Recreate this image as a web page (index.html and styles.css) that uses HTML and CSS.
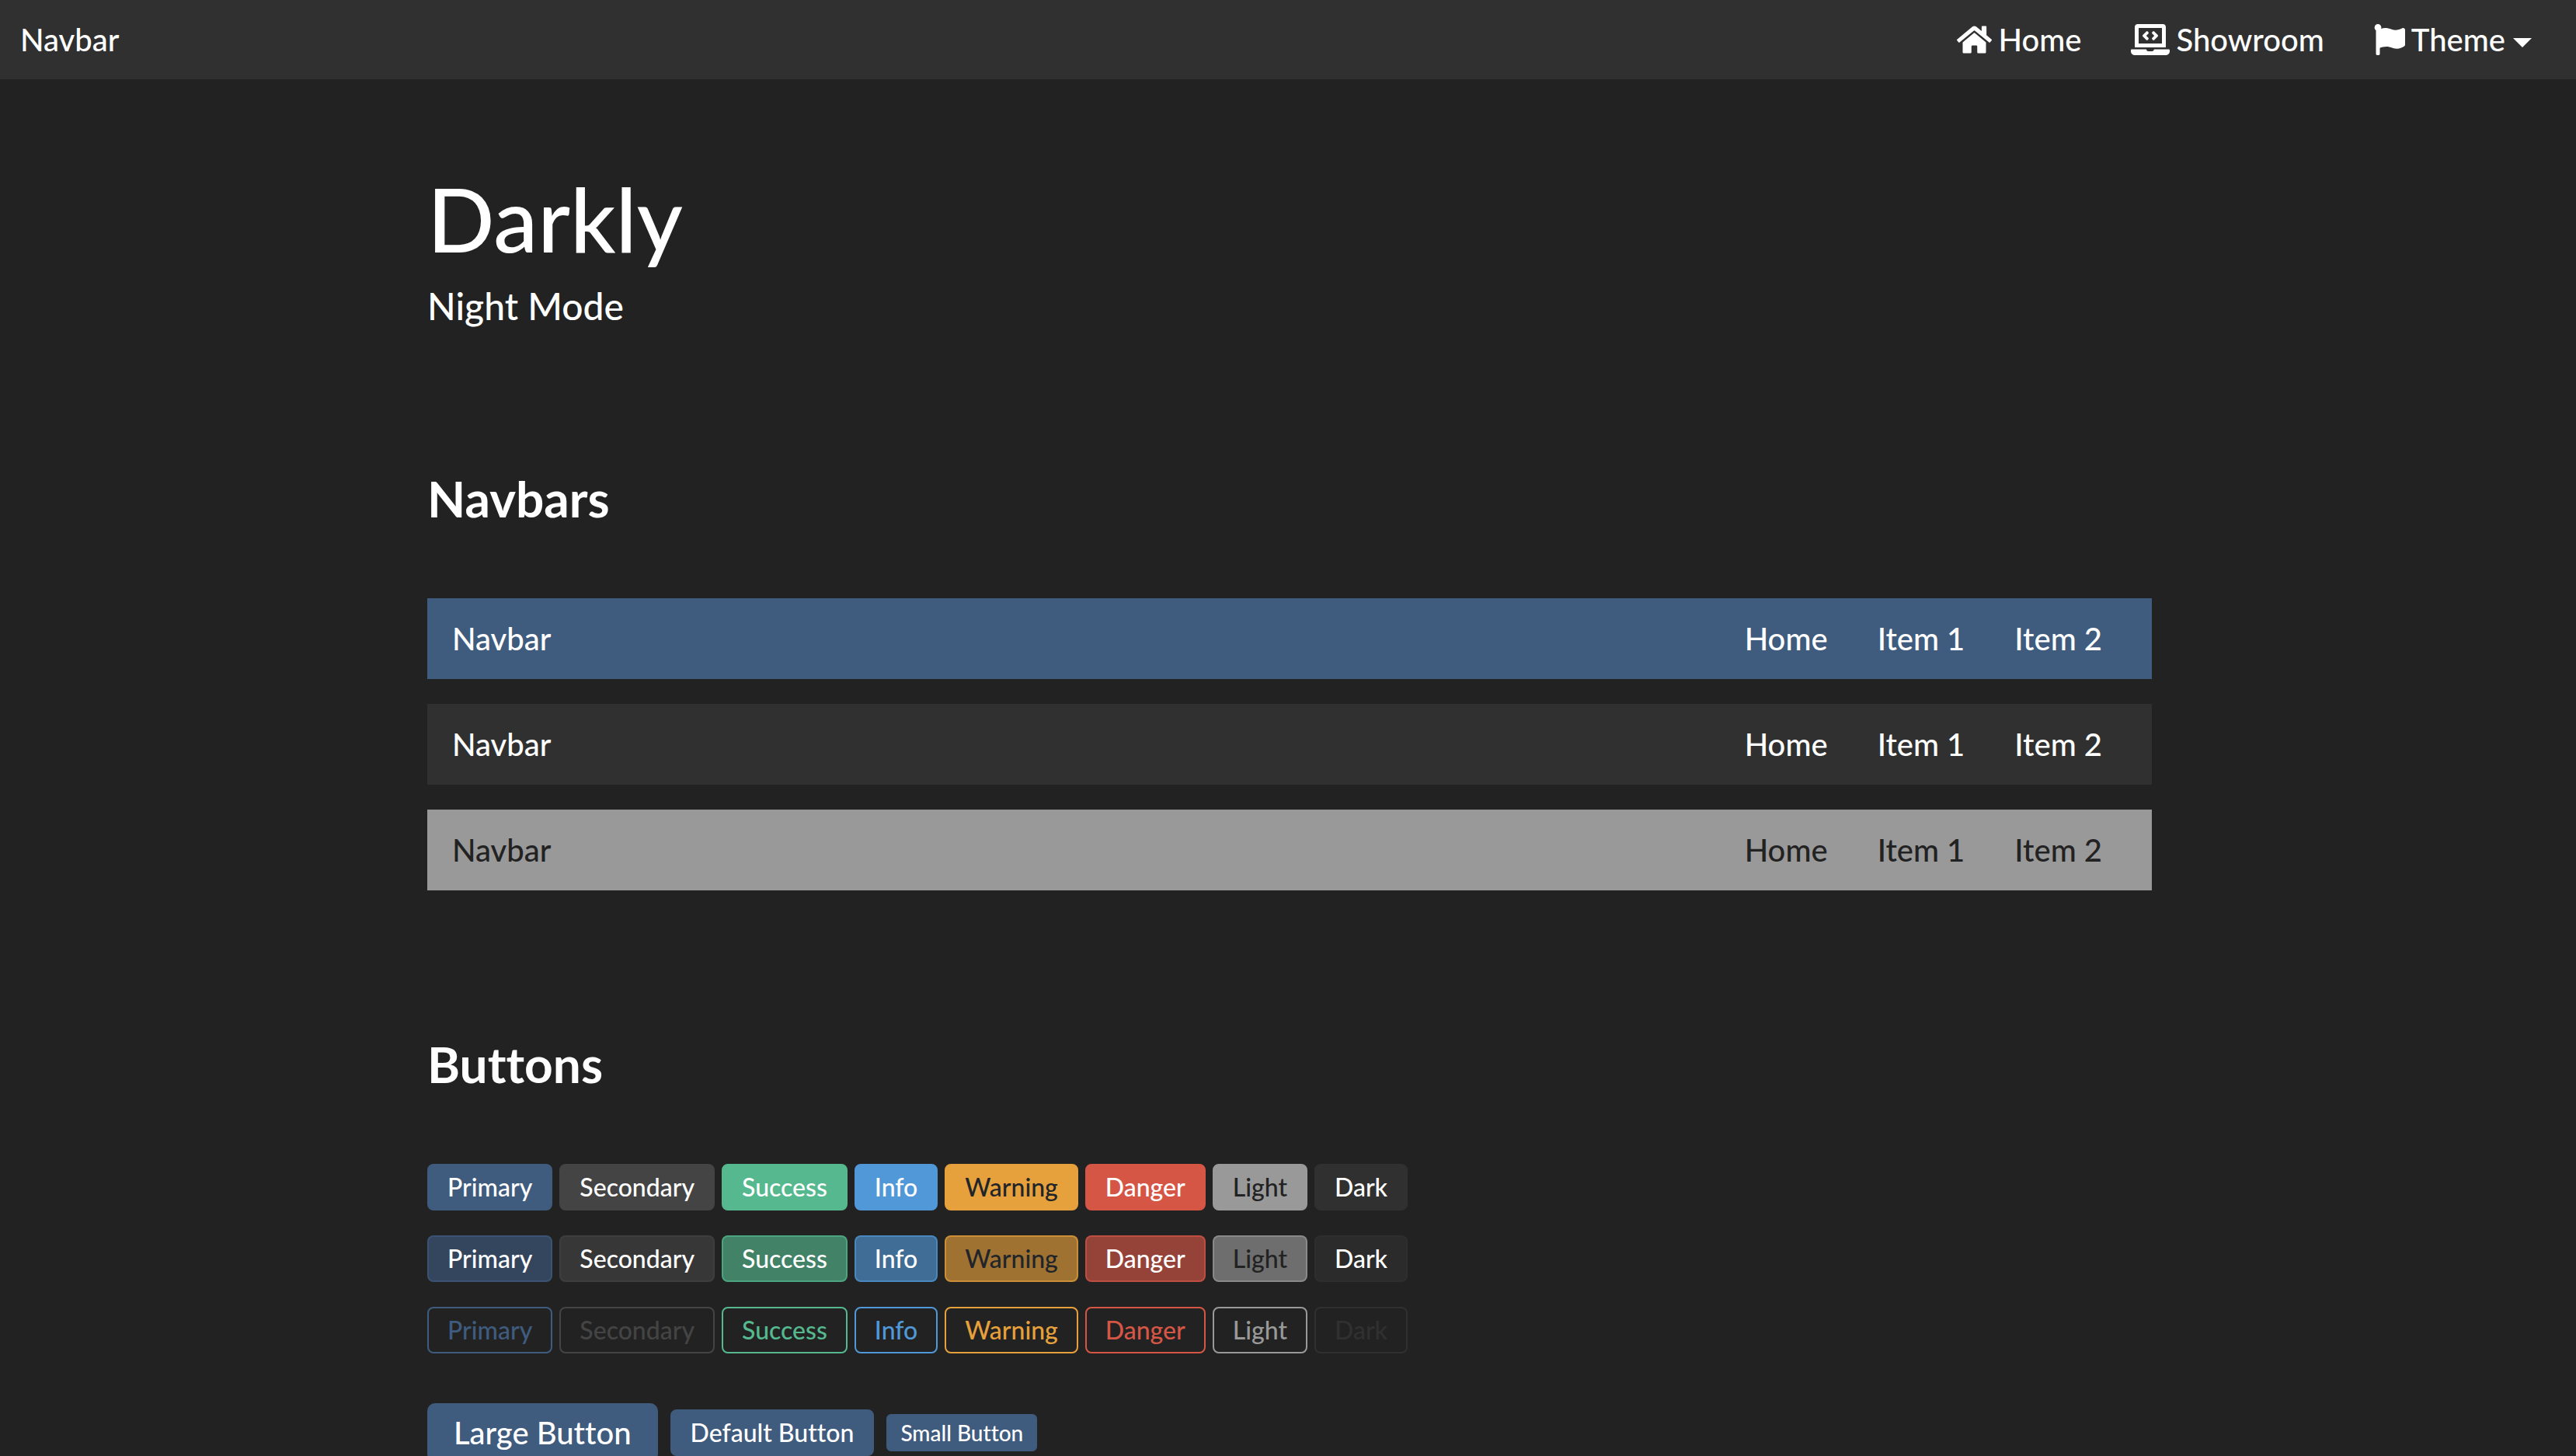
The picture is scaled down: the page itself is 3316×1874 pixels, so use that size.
FILE: index.html
```
<!DOCTYPE html>
<html lang="en">
<head>
<meta charset="utf-8">
<title>Darkly</title>
<meta name="viewport" content="width=device-width, initial-scale=1">
<link rel="stylesheet" href="styles.css">
</head>
<body>
<header class="topbar">
  <a class="brand" href="#">Navbar</a>
  <nav class="links" aria-label="Main">
    <a class="link" href="#"><svg class="icon" viewBox="0 0 576 512" width="45" height="40" aria-hidden="true"><path d="M280.37 148.26L96 300.11V464a16 16 0 0 0 16 16l112.06-.29a16 16 0 0 0 15.92-16V368a16 16 0 0 1 16-16h64a16 16 0 0 1 16 16v95.64a16 16 0 0 0 16 16.05L464 480a16 16 0 0 0 16-16V300L295.67 148.26a12.19 12.19 0 0 0-15.3 0zM571.6 251.47L488 182.56V44.05a12 12 0 0 0-12-12h-56a12 12 0 0 0-12 12v72.61L318.47 43a48 48 0 0 0-61 0L4.34 251.47a12 12 0 0 0-1.6 16.9l25.5 31A12 12 0 0 0 45.15 301l235.22-193.74a12.19 12.19 0 0 1 15.3 0L530.9 301a12 12 0 0 0 16.9-1.6l25.5-31a12 12 0 0 0-1.7-16.93z"/></svg>Home</a>
    <a class="link" href="#"><svg class="icon" viewBox="0 0 640 512" width="50" height="40" aria-hidden="true"><path d="M255.03 261.65c6.25 6.25 16.38 6.25 22.63 0l11.31-11.31c6.25-6.25 6.25-16.38 0-22.63L253.25 192l35.71-35.72c6.25-6.25 6.25-16.38 0-22.63l-11.31-11.31c-6.25-6.25-16.38-6.25-22.63 0l-58.34 58.34c-6.25 6.25-6.25 16.38 0 22.63l58.35 58.34zm96.01-11.3l11.31 11.31c6.25 6.25 16.38 6.25 22.63 0l58.34-58.34c6.25-6.25 6.25-16.38 0-22.63l-58.34-58.34c-6.25-6.25-16.38-6.25-22.63 0l-11.31 11.31c-6.25 6.25-6.25 16.38 0 22.63L386.75 192l-35.71 35.72c-6.25 6.25-6.25 16.38 0 22.63zM624 416H381.54c-.74 19.81-14.71 32-32.74 32H288c-18.69 0-33.02-17.47-32.77-32H16c-8.8 0-16 7.2-16 16v16c0 35.2 28.8 64 64 64h512c35.2 0 64-28.8 64-64v-16c0-8.8-7.2-16-16-16zM576 48c0-26.4-21.6-48-48-48H112C85.6 0 64 21.6 64 48v336h512V48zm-64 272H128V64h384v256z"/></svg>Showroom</a>
    <a class="link" href="#" aria-haspopup="true"><svg class="icon" viewBox="0 0 512 512" width="40" height="40" aria-hidden="true"><path d="M349.565 98.783C295.978 98.783 251.721 64 184.348 64c-24.955 0-47.309 4.384-68.045 12.013a55.947 55.947 0 0 0 3.586-23.562C118.117 24.015 94.806 1.206 66.338.048 34.345-1.254 8 24.296 8 56c0 19.026 9.497 35.825 24 45.945V488c0 13.255 10.745 24 24 24h16c13.255 0 24-10.745 24-24v-94.4c28.311-12.064 63.582-22.122 114.435-22.122 53.588 0 97.844 34.783 165.217 34.783 48.169 0 86.667-16.294 122.505-40.858C506.84 359.452 512 349.571 512 339.045v-243.1c0-23.393-24.269-38.87-45.485-29.016-34.338 15.948-76.454 31.854-116.95 31.854z"/></svg>Theme<span class="caret"></span></a>
  </nav>
</header>

<main class="container">
  <div class="hero">
    <h1 class="hero-title">Darkly</h1>
    <p class="hero-lead">Night Mode</p>
  </div>

  <section class="section">
    <h2 class="section-title">Navbars</h2>
    <div class="navbars">
      <div class="navbar primary">
        <a class="brand" href="#">Navbar</a>
        <nav class="links" aria-label="Primary"><a class="link" href="#">Home</a><a class="link" href="#">Item 1</a><a class="link" href="#">Item 2</a></nav>
      </div>
      <div class="navbar dark">
        <a class="brand" href="#">Navbar</a>
        <nav class="links" aria-label="Dark"><a class="link" href="#">Home</a><a class="link" href="#">Item 1</a><a class="link" href="#">Item 2</a></nav>
      </div>
      <div class="navbar light">
        <a class="brand" href="#">Navbar</a>
        <nav class="links" aria-label="Light"><a class="link" href="#">Home</a><a class="link" href="#">Item 1</a><a class="link" href="#">Item 2</a></nav>
      </div>
    </div>
  </section>

  <section class="section">
    <h2 class="section-title">Buttons</h2>
    <div class="button-rows">
      <div class="row">
        <button type="button" class="btn primary">Primary</button>
        <button type="button" class="btn secondary">Secondary</button>
        <button type="button" class="btn success">Success</button>
        <button type="button" class="btn info">Info</button>
        <button type="button" class="btn warning">Warning</button>
        <button type="button" class="btn danger">Danger</button>
        <button type="button" class="btn light">Light</button>
        <button type="button" class="btn dark">Dark</button>
      </div>
      <div class="row">
        <button type="button" class="btn muted primary">Primary</button>
        <button type="button" class="btn muted secondary">Secondary</button>
        <button type="button" class="btn muted success">Success</button>
        <button type="button" class="btn muted info">Info</button>
        <button type="button" class="btn muted warning">Warning</button>
        <button type="button" class="btn muted danger">Danger</button>
        <button type="button" class="btn muted light">Light</button>
        <button type="button" class="btn muted dark">Dark</button>
      </div>
      <div class="row">
        <button type="button" class="btn outline primary">Primary</button>
        <button type="button" class="btn outline secondary">Secondary</button>
        <button type="button" class="btn outline success">Success</button>
        <button type="button" class="btn outline info">Info</button>
        <button type="button" class="btn outline warning">Warning</button>
        <button type="button" class="btn outline danger">Danger</button>
        <button type="button" class="btn outline light">Light</button>
        <button type="button" class="btn outline dark">Dark</button>
      </div>
    </div>
    <div class="sizes">
      <button type="button" class="btn btn-lg primary">Large Button</button>
      <button type="button" class="btn primary">Default Button</button>
      <button type="button" class="btn btn-sm primary">Small Button</button>
    </div>
  </section>
</main>
</body>
</html>
```
FILE: styles.css
```
* {
  box-sizing: border-box;
}

body {
  margin: 0;
  background: #222;
  color: #fff;
  font-family: Lato, "Liberation Sans", sans-serif;
  font-size: 32px;
  font-weight: 500;
  font-variant-ligatures: none;
  line-height: 48px;
}

h1, h2, p {
  margin: 0;
}

/* Colour themes shared by bars and buttons */
.primary { --tone: #3f5b7e; --ink: #fff; }
.secondary { --tone: #444; --ink: #fff; }
.success { --tone: #55b88e; --ink: #fff; }
.info { --tone: #5098d7; --ink: #fff; }
.warning { --tone: #e6a03c; --ink: #212529; }
.danger { --tone: #d65646; --ink: #fff; }
.light { --tone: #999; --ink: #222; }
.dark { --tone: #303030; --ink: #fff; }

/* Bars */
.topbar,
.navbar {
  display: flex;
  align-items: center;
  justify-content: space-between;
  font-size: 40px;
  line-height: 60px;
}

.topbar {
  padding: 21px 25px 21px 26px;
  background: #303030;
}

.navbar {
  padding: 22px 32px;
  background: var(--tone);
  color: var(--ink);
}

.links {
  display: flex;
}

.brand,
.link {
  color: inherit;
  text-decoration: none;
}

.link {
  display: flex;
  align-items: center;
  padding: 0 32px;
}

.icon {
  margin-right: 8px;
  fill: currentColor;
}

.caret {
  margin: 8px 0 0 10px;
  border: 12px solid transparent;
  border-top-color: currentColor;
  border-bottom: 0;
}

/* Content */
.container {
  max-width: 2280px;
  margin: 0 auto;
  padding: 0 28px 0 32px;
}

.hero {
  padding: 112px 0 78px;
}

.hero-title {
  margin-bottom: 10px;
  font-size: 114px;
  font-weight: 500;
  line-height: 134px;
}

.hero-lead {
  font-size: 48px;
  line-height: 72px;
}

.section {
  padding: 96px 0 90px;
}

.section-title {
  margin-bottom: 90px;
  font-size: 64px;
  font-weight: 700;
  line-height: 76px;
}

.navbars,
.button-rows {
  display: flex;
  flex-direction: column;
  gap: 32px;
}

.row {
  display: flex;
  flex-wrap: wrap;
  gap: 9px;
}

.sizes {
  display: flex;
  flex-wrap: wrap;
  align-items: center;
  gap: 16px;
  margin-top: 64px;
}

/* Buttons */
.btn {
  padding: 4px 24px;
  border: 2px solid var(--tone);
  border-radius: 8px;
  background: var(--tone);
  color: var(--ink);
  font: inherit;
  font-variant-ligatures: none;
}

.muted {
  border-color: color-mix(in srgb, var(--tone) 64%, transparent);
  background: color-mix(in srgb, var(--tone) 64%, transparent);
}

.outline {
  background: transparent;
  color: var(--tone);
}

.btn-lg {
  padding: 6px 32px;
  border-radius: 10px;
  font-size: 40px;
  line-height: 60px;
}

.btn-sm {
  padding: 2px 16px;
  border-radius: 6px;
  font-size: 28px;
  line-height: 40px;
}
```
